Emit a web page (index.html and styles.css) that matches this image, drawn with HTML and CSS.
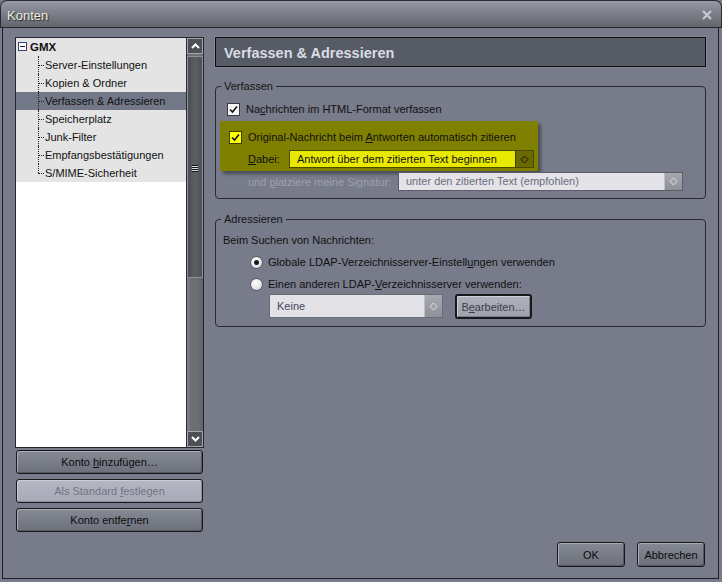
FILE: index.html
```html
<!DOCTYPE html>
<html>
<head>
<meta charset="utf-8">
<title>Konten</title>
<link rel="stylesheet" href="styles.css">
</head>
<body>
<div class="window">
  <div class="titlebar">
    <span class="title">Konten</span>
    <svg class="close" width="10" height="10" viewBox="0 0 10 10"><path d="M1 1 L9 9 M9 1 L1 9" stroke="#c9cacd" stroke-width="2.2"/></svg>
  </div>
  <div class="frame">
    <div class="leftcol">
      <div class="treebox">
        <div class="tree">
          <div class="row root"><span class="minus"><span></span></span><b>GMX</b></div>
          <div class="row child">Server-Einstellungen</div>
          <div class="row child">Kopien &amp; Ordner</div>
          <div class="row child selected">Verfassen &amp; Adressieren</div>
          <div class="row child">Speicherplatz</div>
          <div class="row child">Junk-Filter</div>
          <div class="row child">Empfangsbestätigungen</div>
          <div class="row child last">S/MIME-Sicherheit</div>
        </div>
        <div class="scrollbar">
          <div class="sbtn"><svg width="9" height="6" viewBox="0 0 9 6"><path d="M1 5 L4.5 1.5 L8 5" stroke="#fff" stroke-width="2" fill="none"/></svg></div>
          <div class="thumb"><div class="grip"></div></div>
          <div class="track"></div>
          <div class="sbtn"><svg width="9" height="6" viewBox="0 0 9 6"><path d="M1 1 L4.5 4.5 L8 1" stroke="#fff" stroke-width="2" fill="none"/></svg></div>
        </div>
      </div>
      <div class="btn wide"><span>Konto <u>h</u>inzufügen…</span></div>
      <div class="btn wide disabled"><span>Als Standard <u>f</u>estlegen</span></div>
      <div class="btn wide"><span>Konto entfe<u>r</u>nen</span></div>
    </div>
    <div class="rightcol">
      <div class="pagehead">Verfassen &amp; Adressieren</div>
      <fieldset class="group compose">
        <legend>Verfassen</legend>
        <div class="line first">
          <span class="check"><svg width="9" height="9" viewBox="0 0 9 9"><path d="M1 4.5 L3.5 7 L8 1.5" stroke="#111" stroke-width="1.6" fill="none"/></svg></span>
          <span>Na<u>c</u>hrichten im HTML-Format verfassen</span>
        </div>
        <div class="hilite">
          <div class="line">
            <span class="check yellow"><svg width="9" height="9" viewBox="0 0 9 9"><path d="M1 4.5 L3.5 7 L8 1.5" stroke="#111" stroke-width="1.6" fill="none"/></svg></span>
            <span>Original-Nachricht beim <u>A</u>ntworten automatisch zitieren</span>
          </div>
          <div class="line dabei">
            <span class="lbl"><u>D</u>abei:</span>
            <div class="select ysel"><span class="val">Antwort über dem zitierten Text beginnen</span><span class="arrow"><svg width="9" height="9" viewBox="0 0 9 9"><path d="M4.5 1 L8 4.5 L4.5 8 L1 4.5 Z" stroke="#111" stroke-width="1" fill="none"/></svg></span></div>
          </div>
        </div>
        <div class="line sig">
          <span class="lbl dim">und <u>p</u>latziere meine Signatur:</span>
          <div class="select gsel"><span class="val">unter den zitierten Text (empfohlen)</span><span class="arrow"><svg width="9" height="9" viewBox="0 0 9 9"><path d="M4.5 1 L8 4.5 L4.5 8 L1 4.5 Z" stroke="#e8e8ec" stroke-width="1" fill="none"/></svg></span></div>
        </div>
      </fieldset>
      <fieldset class="group address">
        <legend>Adressieren</legend>
        <div class="line intro">Beim Suchen von Nachrichten:</div>
        <div class="line opt">
          <span class="radio on"><span></span></span>
          <span>Globale LDAP-Verzeichnisserver-Einstell<u>u</u>ngen verwenden</span>
        </div>
        <div class="line opt">
          <span class="radio"></span>
          <span>Einen anderen LDAP-<u>V</u>erzeichnisserver verwenden:</span>
        </div>
        <div class="line ldap">
          <div class="select ksel"><span class="val">Keine</span><span class="arrow"><svg width="9" height="9" viewBox="0 0 9 9"><path d="M4.5 1 L8 4.5 L4.5 8 L1 4.5 Z" stroke="#e8e8ec" stroke-width="1" fill="none"/></svg></span></div>
          <div class="btn edit"><span>B<u>e</u>arbeiten…</span></div>
        </div>
      </fieldset>
      <div class="footer">
        <div class="btn dlg"><span>OK</span></div>
        <div class="btn dlg"><span>Abbrechen</span></div>
      </div>
    </div>
  </div>
</div>
</body>
</html>
```

FILE: styles.css
```css
html, body {
  margin: 0;
  padding: 0;
}
body {
  width: 722px;
  height: 582px;
  overflow: hidden;
  background: #777b8a;
  font-family: "Liberation Sans", Arial, sans-serif;
  font-size: 11px;
  color: #111;
}
u { text-decoration: underline; text-underline-offset: 1px; }

.window {
  width: 722px;
  height: 582px;
  display: flex;
  flex-direction: column;
}
.titlebar {
  flex: none;
  border: 1px solid #2a2b30;
  border-bottom: 1px solid #26272c;
  border-radius: 7px 7px 0 0;
  background: linear-gradient(#969aa4, #80838d 40%, #62656d);
  display: flex;
  align-items: center;
  justify-content: space-between;
  padding: 0 9px 0 6px;
  box-sizing: border-box;
  height: 28px;
}
.title {
  font-family: "Liberation Sans", sans-serif;
  font-size: 13px;
  color: #ecece0;
  text-shadow: 1px 1px 1px #25262a;
  padding-top: 2px;
}
.close { margin-top: 2px; }

.frame {
  flex: 1;
  margin: 0 3px 3px 2px;
  border: 1px solid #1e1f24;
  border-top: none;
  display: flex;
  padding: 9px 12px 11px 12px;
  gap: 11px;
  box-sizing: border-box;
  min-height: 0;
}

/* left column */
.leftcol {
  width: 189px;
  display: flex;
  flex-direction: column;
  gap: 5px;
}
.treebox {
  height: 411px;
  border: 1px solid #25262b;
  box-sizing: border-box;
  display: flex;
  background: #fff;
  margin-bottom: -3px;
}
.tree {
  width: 170px;
  background: #fff;
}
.row {
  height: 18px;
  line-height: 18px;
  background: #e4e4e4;
  position: relative;
  white-space: nowrap;
}
.row.root {
  padding-left: 14px;
  font-size: 11.5px;
}
.minus {
  position: absolute;
  left: 2px;
  top: 4px;
  width: 7px;
  height: 7px;
  border: 1px solid #3a3f7a;
  background: #fff;
}
.minus span {
  position: absolute;
  left: 1px;
  top: 3px;
  width: 5px;
  height: 1px;
  background: #222;
}
.row.child { padding-left: 29px; }
.row.child::before {
  content: "";
  position: absolute;
  left: 22px;
  top: 9px;
  width: 6px;
  border-top: 1px dotted #222;
}
.row.child::after {
  content: "";
  position: absolute;
  left: 22px;
  top: 0;
  height: 18px;
  border-left: 1px dotted #222;
}
.row.child.last::after { height: 9px; }
.row.selected { background: #737888; }

.scrollbar {
  width: 17px;
  border-left: 1px solid #2b2c31;
  box-sizing: border-box;
  display: flex;
  flex-direction: column;
  background: #6c6f74;
}
.sbtn {
  height: 16px;
  flex: none;
  background: #4c5056;
  border: 1px solid #a3a6ab;
  box-sizing: border-box;
  display: flex;
  align-items: center;
  justify-content: center;
}
.thumb {
  height: 222px;
  margin-top: 2px;
  flex: none;
  border: 1px solid #8e9196;
  box-sizing: border-box;
  background: linear-gradient(90deg, #4a4e53, #5c6065 50%, #4d5156);
  display: flex;
  align-items: center;
  justify-content: center;
}
.grip {
  width: 6px;
  height: 7px;
  background: repeating-linear-gradient(#111 0 1px, #dfe0e2 1px 2px);
  margin-top: 2px;
}
.track {
  flex: 1;
  background: linear-gradient(90deg, #7e8186, #6b6e73 30%, #6b6e73 70%, #5f6267);
}

.btn {
  height: 24px;
  box-sizing: border-box;
  border: 1px solid #17181c;
  border-radius: 3px;
  background: linear-gradient(#858a95, #6c707b);
  box-shadow: inset 1px 1px 0 #a9adb6, inset -1px -1px 0 #55585f;
  display: flex;
  align-items: center;
  justify-content: center;
  color: #0c0c0c;
  white-space: nowrap;
}
.btn.wide { margin: 0 1px; }
.btn.disabled {
  background: linear-gradient(#b4b7c3, #a8abb7);
  box-shadow: inset 1px 1px 0 #ccced8, inset -1px -1px 0 #8e919c;
  color: #717483;
}

/* right column */
.rightcol {
  flex: 1;
  display: flex;
  flex-direction: column;
}
.pagehead {
  height: 30px;
  box-sizing: border-box;
  border: 1px solid #0d0e11;
  background: #575b66;
  box-shadow: 0 0 0 1px #858997;
  color: #d9dce4;
  font-weight: bold;
  font-size: 14.5px;
  line-height: 30px;
  padding-left: 8px;
}
.group {
  margin: 0;
  border: 1px solid #2a2b30;
  border-radius: 4px;
  padding: 0;
  min-width: 0;
}
.group legend {
  padding: 0 3px;
  margin-left: 5px;
  line-height: 14px;
  font-size: 11px;
  color: #151515;
}
.compose { margin-top: 12px; padding-bottom: 7px; }
.line {
  display: flex;
  align-items: center;
  white-space: nowrap;
}
.compose .line.first {
  margin-top: 8px;
  height: 16px;
  padding-left: 11px;
}
.check {
  width: 13px;
  height: 13px;
  box-sizing: border-box;
  border: 1px solid #3a3b40;
  background: #f4f4f4;
  display: flex;
  align-items: center;
  justify-content: center;
  margin-right: 6px;
  flex: none;
}
.check.yellow { background: #ffff00; border-color: #3d3d00; }
.hilite {
  width: 318px;
  height: 50px;
  margin: 4px 0 0 4px;
  background: #808000;
  box-shadow: 3px 3px 3px rgba(20, 20, 30, 0.45);
  padding: 8px 4px 3px 9px;
  box-sizing: border-box;
}
.hilite .line { height: 16px; }
.hilite .dabei {
  height: 18px;
  margin-top: 5px;
  padding-left: 19px;
  justify-content: space-between;
}
.select {
  display: flex;
  height: 18px;
  box-sizing: border-box;
  border: 1px solid #3c3d44;
}
.select .val {
  flex: 1;
  padding-left: 7px;
  line-height: 16px;
  font-size: 11px;
}
.select .arrow {
  width: 17px;
  display: flex;
  align-items: center;
  justify-content: center;
  border-left: 1px solid #55565c;
}
.ysel {
  width: 245px;
  background: #e8e800;
  border-color: #4a4a00;
}
.ysel .val { color: #111; }
.ysel .arrow { background: #6a6a00; border-left-color: #3e3e00; }
.sig {
  height: 19px;
  margin-top: 1px;
  padding-left: 32px;
  padding-right: 22px;
  justify-content: space-between;
}
.dim { color: #9fa1ac; }
.gsel {
  width: 285px;
  height: 19px;
  background: #e3e3e8;
  border-color: #5a5c66;
}
.gsel .val { color: #6b6d7b; line-height: 17px; }
.gsel .arrow, .ksel .arrow {
  background: linear-gradient(#a6a9b0, #8e9199);
  border-left-color: #c0c2c8;
}
.address {
  margin-top: 13px;
  padding: 0 0 7px 0;
}
.address .intro {
  height: 16px;
  margin-top: 6px;
  padding-left: 7px;
}
.address .opt {
  height: 16px;
  margin-top: 6px;
  padding-left: 34px;
}
.radio {
  width: 13px;
  height: 13px;
  box-sizing: border-box;
  border-radius: 50%;
  border: 1px solid #55575f;
  background: radial-gradient(circle at 40% 35%, #ffffff, #e4e4e8 60%, #c9cad0);
  margin-right: 5px;
  display: flex;
  align-items: center;
  justify-content: center;
  flex: none;
}
.radio.on span {
  width: 5px;
  height: 5px;
  border-radius: 50%;
  background: #1a1a1a;
}
.ldap {
  margin-top: 2px;
  padding-left: 53px;
  gap: 12px;
  align-items: flex-start;
}
.ksel {
  width: 174px;
  height: 24px;
  background: #e2e2e7;
  border-color: #6a6c76;
}
.ksel .val { line-height: 22px; color: #45475a; }
.btn.edit {
  width: 77px;
  height: 25px;
  border: 2px solid #17181c;
  background: linear-gradient(#aeb1bc, #9fa2ad);
  box-shadow: inset 1px 1px 0 #d0d2da, inset -1px -1px 0 #7c7f89;
  color: #3b3d48;
}
.footer {
  margin-top: auto;
  display: flex;
  justify-content: flex-end;
  gap: 12px;
  padding-right: 1px;
}
.btn.dlg {
  width: 68px;
  height: 25px;
}
```
